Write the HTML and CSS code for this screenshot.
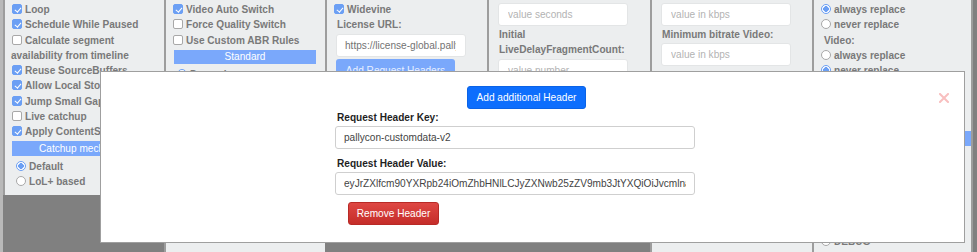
FILE: index.html
```html
<!DOCTYPE html>
<html lang="en">
<head>
    <meta charset="UTF-8">
    <meta name="viewport" content="width=device-width, initial-scale=1.0">
    <title>Player Settings</title>
    <link rel="stylesheet" href="styles.css">
</head>
<body>

    <div class="board">
        <!-- playback options -->
        <div class="col short">
            <div class="row"><span class="cb on"></span>Loop</div>
            <div class="row"><span class="cb on"></span>Schedule While Paused</div>
            <div class="row wrap"><span class="cb"></span>Calculate segment<br>availability from timeline</div>
            <div class="row"><span class="cb on"></span>Reuse SourceBuffers</div>
            <div class="row"><span class="cb on"></span>Allow Local Storage</div>
            <div class="row"><span class="cb on"></span>Jump Small Gaps</div>
            <div class="row"><span class="cb"></span>Live catchup</div>
            <div class="row"><span class="cb on"></span>Apply ContentSteering</div>
            <div class="bar">Catchup mechanism</div>
            <div class="row indent"><span class="rd on"></span>Default</div>
            <div class="row indent"><span class="rd"></span>LoL+ based</div>
        </div>

        <!-- abr -->
        <div class="col tall">
            <div class="row"><span class="cb on"></span>Video Auto Switch</div>
            <div class="row"><span class="cb"></span>Force Quality Switch</div>
            <div class="row"><span class="cb"></span>Use Custom ABR Rules</div>
            <div class="bar">Standard</div>
            <div class="rules">
                <div class="row indent"><span class="rd on"></span>Dynamic</div>
                <div class="row indent"><span class="rd"></span>BOLA</div>
                <div class="row indent"><span class="rd"></span>Throughput</div>
            </div>
        </div>

        <!-- drm -->
        <div class="col mid">
            <div class="row"><span class="cb on"></span>Widevine</div>
            <div class="row lbl">License URL:</div>
            <input class="field value" type="text" value="https://license-global.pallycon.com/ri/licenseManager.do">
            <button class="soft-btn">Add Request Headers</button>
        </div>

        <!-- live delay -->
        <div class="col mid">
            <input class="field" type="text" placeholder="value seconds">
            <div class="row lbl">Initial</div>
            <div class="row lbl">LiveDelayFragmentCount:</div>
            <input class="field" type="text" placeholder="value number">
        </div>

        <!-- bitrates -->
        <div class="col tall">
            <input class="field" type="text" placeholder="value in kbps">
            <div class="row lbl gap">Minimum bitrate Video:</div>
            <input class="field" type="text" placeholder="value in kbps">
            <div class="row lbl spaced">Initial bitrate Audio:</div>
            <input class="field" type="text" placeholder="value in kbps">
            <div class="row lbl">Initial bitrate Video:</div>
            <input class="field" type="text" placeholder="value in kbps">
            <div class="row lbl">Initial Text Role:</div>
            <input class="field" type="text" placeholder="text initial role, e.g. 'caption'">
            <input class="field late" type="text" placeholder="text initial role, e.g. 'caption'">
        </div>

        <!-- track switch + log level -->
        <div class="col tall last">
            <div class="row"><span class="rd on"></span>always replace</div>
            <div class="row"><span class="rd"></span>never replace</div>
            <div class="row lbl">Video:</div>
            <div class="row"><span class="rd"></span>always replace</div>
            <div class="row"><span class="rd on"></span>never replace</div>
            <div class="row lbl">Text:</div>
            <div class="row"><span class="rd on"></span>always replace</div>
            <div class="section">
                <div class="bar">Log level</div>
                <div class="levels">
                    <div class="row"><span class="rd"></span>NONE</div>
                    <div class="row"><span class="rd"></span>FATAL</div>
                    <div class="row"><span class="rd"></span>ERROR</div>
                    <div class="row"><span class="rd on"></span>WARNING</div>
                    <div class="row"><span class="rd"></span>INFO</div>
                    <div class="row"><span class="rd"></span>DEBUG</div>
                </div>
            </div>
        </div>
    </div>

    <div class="modal">
        <svg class="close" width="10" height="10" viewBox="0 0 10 10">
            <path d="M1 1 L9 9 M9 1 L1 9" stroke="#f8bfbf" stroke-width="2" stroke-linecap="square"/>
        </svg>

        <button class="add-btn">Add additional Header</button>

        <div class="group">
            <label class="mlabel" for="hkey">Request Header Key:</label>
            <input class="minput" id="hkey" type="text" value="pallycon-customdata-v2">
        </div>

        <div class="group">
            <label class="mlabel" for="hval">Request Header Value:</label>
            <input class="minput" id="hval" type="text" value="eyJrZXlfcm90YXRpb24iOmZhbHNlLCJyZXNwb25zZV9mb3JtYXQiOiJvcmlnaW5hbCJ9">
        </div>

        <button class="remove-btn">Remove Header</button>
    </div>

</body>
</html>
```

FILE: styles.css
```css
body {
    margin: 0;
    height: 252px;
    overflow: hidden;
    position: relative;
    background: #808080;
    font-family: 'Liberation Sans', Arial, sans-serif;
}

.board {
    display: grid;
    grid-template-columns: 161px 161px 162px 163px 162px 161px;
    align-items: start;
    border-left: 3px solid #b9b9b9;
}

.col {
    box-sizing: border-box;
    background: #eceeef;
    border-left: 2px solid #9d9d9d;
    padding: 2px 6px 5px;
    overflow: hidden;
}

.col.last {
    border-right: 2px solid #9d9d9d;
}

.short { height: 195px; }
.mid { height: 232px; }
.tall { height: 262px; }

.row {
    font-size: 10.1px;
    font-weight: bold;
    line-height: 15.3px;
    color: #797979;
    white-space: nowrap;
    padding-left: 1px;
}

.row.wrap {
    white-space: normal;
    padding-left: 0;
}

.row.wrap .cb {
    margin-left: 1px;
}

.row.indent {
    padding-left: 5px;
}

.lbl {
    padding-left: 4px;
}

.lbl.gap {
    margin-top: 1px;
}

.lbl.spaced {
    margin-top: 6px;
}

.rules {
    margin-top: 3px;
}

/* fake checkbox */
.cb {
    display: inline-block;
    position: relative;
    box-sizing: border-box;
    width: 10px;
    height: 10px;
    margin-right: 3px;
    vertical-align: -1px;
    background: #fff;
    border: 1px solid #a8a8a8;
    border-radius: 2px;
}

.cb.on {
    background: #6b9ff4;
    border-color: #6b9ff4;
}

.cb.on::after {
    content: '';
    position: absolute;
    left: 2.5px;
    top: 0.5px;
    width: 2.5px;
    height: 5px;
    border: solid #fff;
    border-width: 0 1.5px 1.5px 0;
    transform: rotate(40deg);
}

/* fake radio */
.rd {
    display: inline-block;
    box-sizing: border-box;
    width: 10px;
    height: 10px;
    margin-right: 3px;
    vertical-align: -1px;
    background: #fff;
    border: 1px solid #a8a8a8;
    border-radius: 50%;
}

.rd.on {
    border: 1px solid #6b9ff4;
    background: radial-gradient(circle, #6b9ff4 0 2.6px, #fff 3px);
}

.bar {
    height: 14px;
    line-height: 14px;
    margin: 2px 3px 0 2px;
    background: #7aa8fb;
    color: #fff;
    text-align: center;
    font-size: 10.1px;
    white-space: nowrap;
    overflow: hidden;
}

.col.short .bar {
    margin: 1px 0 3px 1px;
    height: 15px;
    line-height: 15px;
}

.field {
    display: block;
    box-sizing: border-box;
    width: 130px;
    height: 23px;
    margin: 1px 0 1px 3px;
    padding: 0 9px;
    background: #fff;
    border: 1px solid #e3e5e6;
    border-radius: 3px;
    font-family: 'Liberation Sans', Arial, sans-serif;
    font-size: 10.1px;
    color: #777;
}

.field::placeholder {
    color: #b3b3b3;
}

.field.value {
    padding-left: 8px;
    color: #737373;
}

.field.late {
    margin-top: 4px;
}

.soft-btn {
    display: block;
    width: 119px;
    height: 23px;
    margin: 2px 0 0 3px;
    background: #7aa8fb;
    border: none;
    border-radius: 3px;
    color: #e8f0ff;
    font-family: 'Liberation Sans', Arial, sans-serif;
    font-size: 10.1px;
}

.section {
    margin-top: 18px;
    border-top: 1px solid #a5a5a5;
    padding-top: 3px;
}

.section .bar {
    margin: 0 -6px 0 1px;
    height: 15px;
}

.levels {
    margin-top: 11px;
}

/* header dialog */
.modal {
    position: absolute;
    left: 100px;
    top: 71px;
    width: 865px;
    height: 172px;
    box-sizing: border-box;
    background: #fff;
    border: 1px solid #9f9f9f;
    padding: 14px 0 0 234px;
}

.close {
    position: absolute;
    right: 15px;
    top: 21px;
}

.add-btn {
    display: block;
    width: 119px;
    height: 23px;
    margin-left: 132px;
    background: #0d6efd;
    border: 1px solid #0b63e6;
    border-radius: 3px;
    color: #fff;
    font-family: 'Liberation Sans', Arial, sans-serif;
    font-size: 10.1px;
    padding: 0;
}

.group + .group {
    margin-top: 6px;
}

.mlabel {
    display: block;
    padding-left: 2px;
    font-size: 10.1px;
    font-weight: bold;
    line-height: 17px;
    color: #1f1f1f;
}

.minput {
    display: block;
    box-sizing: border-box;
    width: 360px;
    height: 23px;
    padding: 0 8px;
    border: 1px solid #cfcfcf;
    border-radius: 3px;
    font-family: 'Liberation Sans', Arial, sans-serif;
    font-size: 10.1px;
    color: #444;
}

.remove-btn {
    display: block;
    width: 91px;
    height: 23px;
    margin: 7px 0 0 13px;
    padding: 0;
    background: linear-gradient(#de4743, #c52d29);
    border: 1px solid #b82a26;
    border-radius: 3px;
    color: #fff;
    font-family: 'Liberation Sans', Arial, sans-serif;
    font-size: 10.1px;
}
```
